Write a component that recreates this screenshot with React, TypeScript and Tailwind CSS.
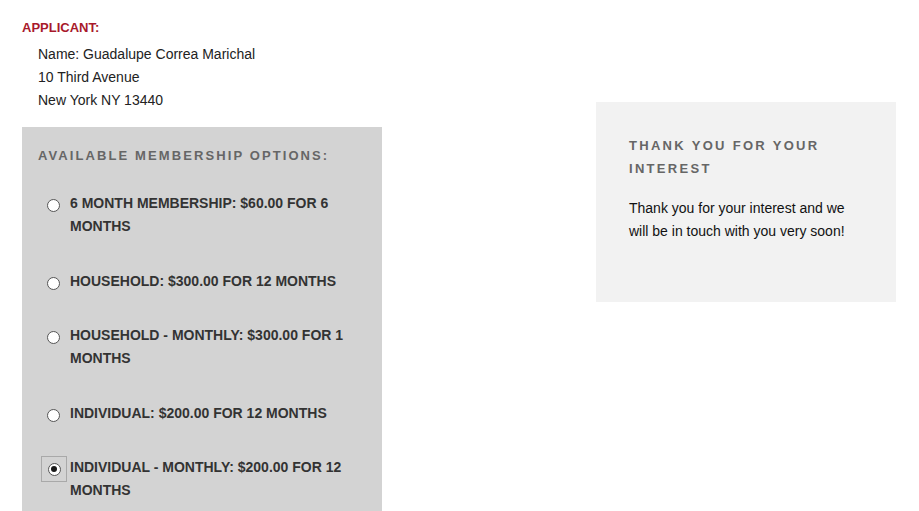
const options = [
  { label: '6 MONTH MEMBERSHIP: $60.00 FOR 6 MONTHS', checked: false },
  { label: 'HOUSEHOLD: $300.00 FOR 12 MONTHS', checked: false },
  { label: 'HOUSEHOLD - MONTHLY: $300.00 FOR 1 MONTHS', checked: false },
  { label: 'INDIVIDUAL: $200.00 FOR 12 MONTHS', checked: false },
  { label: 'INDIVIDUAL - MONTHLY: $200.00 FOR 12 MONTHS', checked: true },
];

function Radio({ checked }: { checked: boolean }) {
  const circle = (
    <span className="flex h-[13px] w-[13px] items-center justify-center rounded-full border border-[#555] bg-white">
      {checked && <span className="h-[6px] w-[6px] rounded-full bg-[#1a1a1a]" />}
    </span>
  );
  if (checked) {
    return (
      <span className="ml-[3px] flex h-[26px] w-[26px] items-center justify-center border border-[#a9a9a9]">
        {circle}
      </span>
    );
  }
  return <span className="ml-[9px] mt-[7px] block">{circle}</span>;
}

export default function App() {
  return (
    <div className="flex min-h-[511px] items-start bg-white pl-[22px] font-['Liberation_Sans',Arial,sans-serif]">
      {/* Left column */}
      <div className="w-[360px]">
        <div className="pt-[21px] text-[13px] font-bold leading-[14px] text-[#a8192b]">APPLICANT:</div>
        <div className="mt-[8px] pl-[16px] text-[14px] leading-[23px] text-[#222]">
          <div>Name: Guadalupe Correa Marichal</div>
          <div>10 Third Avenue</div>
          <div>New York NY 13440</div>
        </div>

        {/* Membership options */}
        <div className="mt-[15px] bg-[#d3d3d3] px-[16px] pt-[17px] pb-[20px]">
          <div className="text-[13px] font-bold leading-[23px] tracking-[2.1px] text-[#666]">
            AVAILABLE MEMBERSHIP OPTIONS:
          </div>
          <div className="mt-[25px] flex flex-col gap-[31.6px]">
            {options.map((o) => (
              <div key={o.label} className="flex items-start">
                <div className="w-[32px] shrink-0">
                  <Radio checked={o.checked} />
                </div>
                <div className="w-[280px] text-[14px] font-bold leading-[23px] text-[#333]">{o.label}</div>
              </div>
            ))}
          </div>
        </div>
      </div>

      {/* Right panel */}
      <div className="ml-[214px] mt-[102px] h-[200px] w-[300px] bg-[#f2f2f2] px-[33px] pt-[32px]">
        <div className="text-[13px] font-bold leading-[23px] tracking-[2.3px] text-[#666]">
          THANK YOU FOR YOUR INTEREST
        </div>
        <p className="mt-[17px] text-[14px] leading-[23px] text-[#111]">
          Thank you for your interest and we will be in touch with you very soon!
        </p>
      </div>
    </div>
  );
}
